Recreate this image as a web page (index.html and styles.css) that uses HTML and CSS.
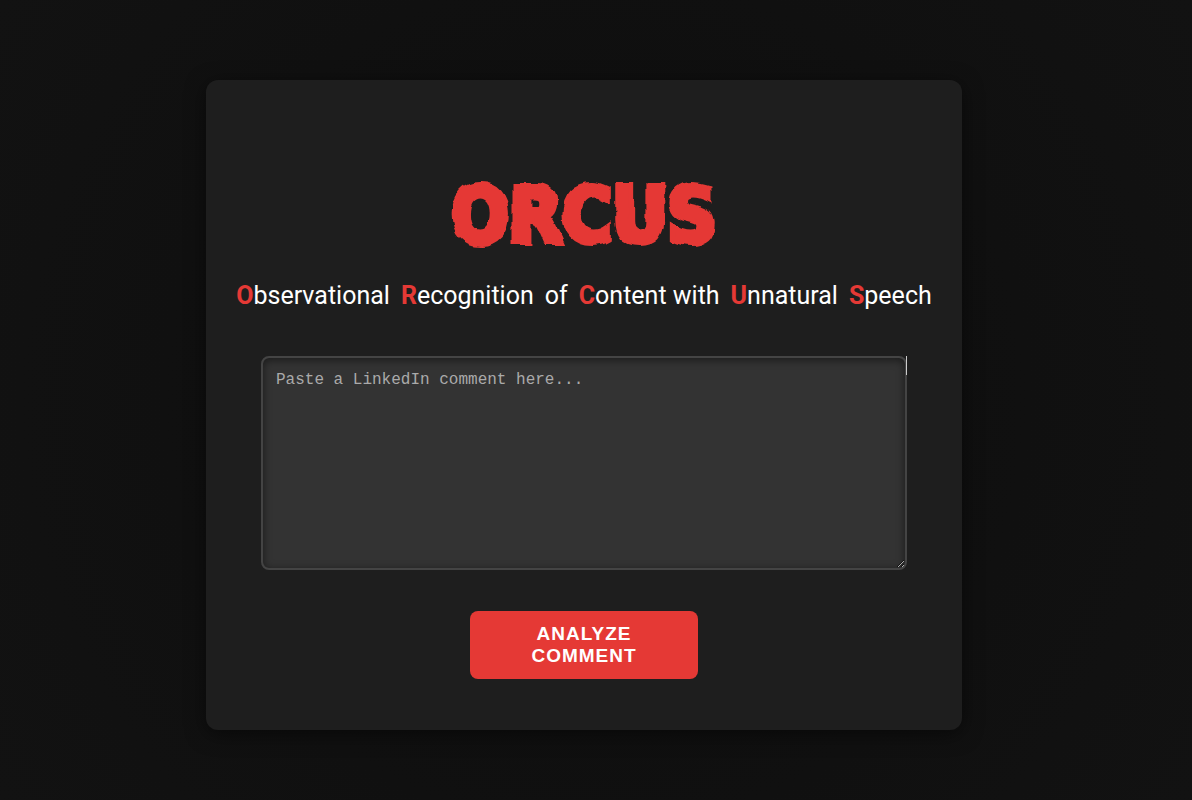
FILE: index.html
```html
<!DOCTYPE html>
<html lang="en">
<head>
<meta charset="utf-8">
<meta name="viewport" content="width=device-width, initial-scale=1">
<title>ORCUS</title>
<link rel="stylesheet" href="styles.css">
</head>
<body>
<svg class="filters" aria-hidden="true">
  <filter id="rough" x="-5%" y="-5%" width="110%" height="110%">
    <feTurbulence type="fractalNoise" baseFrequency="0.08" numOctaves="1" seed="4" result="noise"/>
    <feDisplacementMap in="SourceGraphic" in2="noise" scale="7" xChannelSelector="R" yChannelSelector="G"/>
  </filter>
</svg>
<main class="card">
  <h1 class="title">ORCUS</h1>
  <p class="tagline"><span><b>O</b>bservational</span> <span><b>R</b>ecognition</span> <span>of</span> <span><b>C</b>ontent with</span> <span><b>U</b>nnatural</span> <span><b>S</b>peech</span></p>
  <form class="form">
    <div class="field">
      <textarea class="comment" aria-label="LinkedIn comment" placeholder="Paste a LinkedIn comment here..."></textarea>
      <span class="caret"></span>
    </div>
    <button class="analyze" type="button">Analyze Comment</button>
  </form>
</main>
</body>
</html>
```
FILE: styles.css
```css
* { box-sizing: border-box; }

body {
  margin: 0;
  min-height: 100vh;
  padding: 80px 24px 70px 0;
  background: radial-gradient(circle, #0d0d0d, #121212);
  color: #fff;
  font-family: Roboto, sans-serif;
}

.filters { position: absolute; width: 0; height: 0; }

.card {
  width: 100%;
  max-width: 756px;
  min-height: 650px;
  margin: 0 auto;
  padding: 88px 24px 48px;
  border-radius: 12px;
  background: #1e1e1e;
  box-shadow: 0 4px 20px rgba(0, 0, 0, 0.5);
  text-align: center;
}

.title {
  margin: 0;
  color: #e53935;
  font-family: "DejaVu Sans Condensed", sans-serif;
  font-size: 76px;
  font-weight: 700;
  line-height: 96px;
  -webkit-text-stroke: 6px #e53935;
  filter: url(#rough);
}

.tagline {
  display: flex;
  flex-wrap: wrap;
  justify-content: center;
  gap: 0 11px;
  margin: 16px 0 44px;
  font-size: 25px;
  line-height: 32px;
}

.tagline b { color: #e53935; }

.form {
  display: flex;
  flex-direction: column;
  align-items: center;
  gap: 41px;
}

.field {
  position: relative;
  width: 100%;
  max-width: 646px;
}

.comment {
  display: block;
  width: 100%;
  height: 214px;
  padding: 13px;
  border: 2px solid #444;
  border-radius: 8px;
  outline: none;
  background: #333;
  box-shadow: inset 0 2px 8px rgba(0, 0, 0, 0.5);
  color: #fff;
  font-family: "Liberation Mono", monospace;
  font-size: 16px;
  resize: vertical;
}

.comment::placeholder { color: #aaa; }

.caret {
  position: absolute;
  top: 0;
  right: 0;
  width: 1px;
  height: 19px;
  background: #ccc;
}

.analyze {
  width: 228px;
  padding: 12px 48px;
  border: 0;
  border-radius: 8px;
  background: #e53935;
  color: #fff;
  font-family: "Liberation Sans", Arial, sans-serif;
  font-size: 19px;
  font-weight: 700;
  line-height: 22px;
  letter-spacing: 1px;
  text-transform: uppercase;
}
```
